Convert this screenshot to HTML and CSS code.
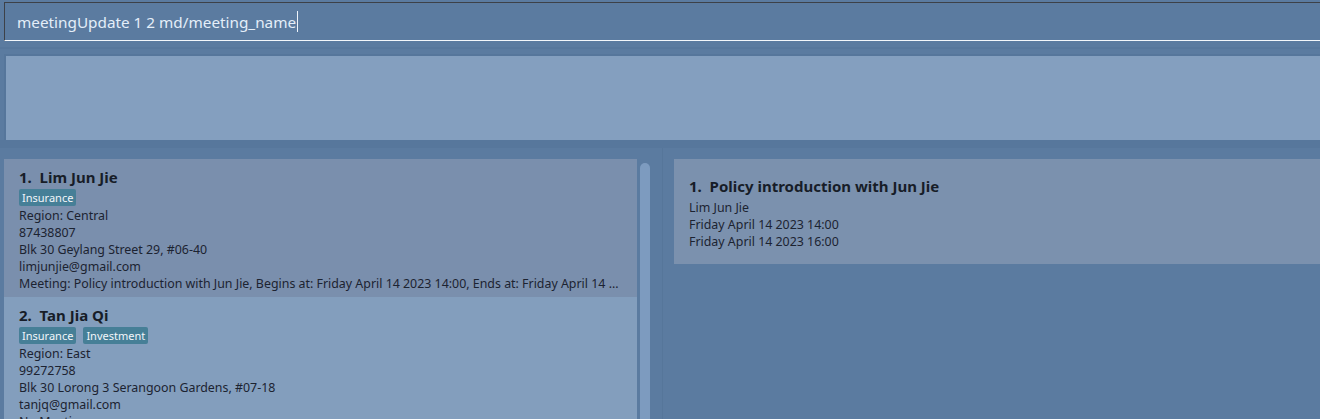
FILE: index.html
```html
<!DOCTYPE html>
<html>
<head>
<meta charset="utf-8">
<link rel="stylesheet" href="styles.css">
</head>
<body>
<div class="app">
  <div class="command">
    <span class="command-text">meetingUpdate 1 2 md/meeting_name</span><span class="caret"></span>
  </div>
  <div class="result-section">
    <div class="result-box"></div>
  </div>
  <div class="lists">
    <div class="left-panel">
      <div class="person-list">
        <div class="card selected">
          <div class="name">1.&nbsp;&nbsp;Lim Jun Jie</div>
          <div class="tags"><span class="tag">Insurance</span></div>
          <div class="line">Region: Central</div>
          <div class="line">87438807</div>
          <div class="line">Blk 30 Geylang Street 29, #06-40</div>
          <div class="line">limjunjie@gmail.com</div>
          <div class="line ellipsis">Meeting: Policy introduction with Jun Jie, Begins at: Friday April 14 2023 14:00, Ends at: Friday April 14 2023 16:00</div>
        </div>
        <div class="card">
          <div class="name">2.&nbsp;&nbsp;Tan Jia Qi</div>
          <div class="tags"><span class="tag">Insurance</span><span class="tag">Investment</span></div>
          <div class="line">Region: East</div>
          <div class="line">99272758</div>
          <div class="line">Blk 30 Lorong 3 Serangoon Gardens, #07-18</div>
          <div class="line">tanjq@gmail.com</div>
          <div class="line">No Meeting</div>
        </div>
      </div>
      <div class="scrollbar"><div class="thumb"></div></div>
    </div>
    <div class="right-panel">
      <div class="meeting-card">
        <div class="name">1.&nbsp;&nbsp;Policy introduction with Jun Jie</div>
        <div class="line">Lim Jun Jie</div>
        <div class="line">Friday April 14 2023 14:00</div>
        <div class="line">Friday April 14 2023 16:00</div>
      </div>
    </div>
  </div>
</div>
</body>
</html>
```

FILE: styles.css
```css
html, body {
  margin: 0;
  padding: 0;
  height: 100%;
  overflow: hidden;
}
body {
  background: #5b7ba0;
  font-family: "Noto Sans", "Open Sans", sans-serif;
  color: #1c2331;
}
.app {
  display: flex;
  flex-direction: column;
  padding-top: 2px;
}
.command {
  margin-left: 4px;
  height: 37px;
  border-top: 1px solid #3d4148;
  border-left: 1px solid #3d4148;
  border-bottom: 1px solid #f4f7fb;
  display: flex;
  align-items: center;
  padding-left: 12px;
  font-size: 15.3px;
  color: #e4eef9;
}
.caret {
  display: inline-block;
  width: 1px;
  height: 21px;
  background: #eef4fb;
  margin-left: 1px;
}
.result-section {
  margin-top: 6px;
  border-top: 2px solid #57779c;
  padding-top: 5px;
  border-bottom: 7px solid #57779c;
  padding-left: 4px;
}
.result-box {
  height: 84px;
  background: #849fbf;
  border: 2px solid #56769b;
  border-right: none;
  border-bottom: none;
}
.lists {
  display: flex;
  border-top: 1px solid #57779c;
  height: 300px;
}
.left-panel {
  width: 658px;
  padding-left: 4px;
  padding-top: 11px;
  display: flex;
  border-right: 1px solid #56769a;
}
.person-list {
  width: 633px;
  display: flex;
  flex-direction: column;
}
.card {
  background: #839ebd;
  padding: 8px 12px 5px 15px;
  font-size: 13px;
}
.card.selected {
  background: #7a8fad;
}
.name {
  font-size: 15px;
  font-weight: 700;
  line-height: 20px;
  color: #171d28;
}
.tags {
  display: flex;
  gap: 7px;
  margin-top: 2px;
  margin-bottom: 1px;
}
.tag {
  background: #467f97;
  color: #f2f6fa;
  font-size: 11px;
  line-height: 17px;
  height: 17px;
  padding: 0 3px;
  border-radius: 2px;
}
.line {
  line-height: 17px;
  font-size: 12.4px;
  white-space: nowrap;
}
.ellipsis {
  overflow: hidden;
  text-overflow: ellipsis;
}
.scrollbar {
  width: 10px;
  margin-left: 3px;
  padding-top: 4px;
}
.thumb {
  height: 100%;
  background: #7d9bbf;
  border-radius: 5px;
}
.right-panel {
  flex: 1;
  padding: 11px 0 0 11px;
}
.meeting-card {
  background: #7b91ae;
  padding: 17px 15px 14px 15px;
  font-size: 13px;
}
.meeting-card .name {
  margin-bottom: 3px;
}
```
